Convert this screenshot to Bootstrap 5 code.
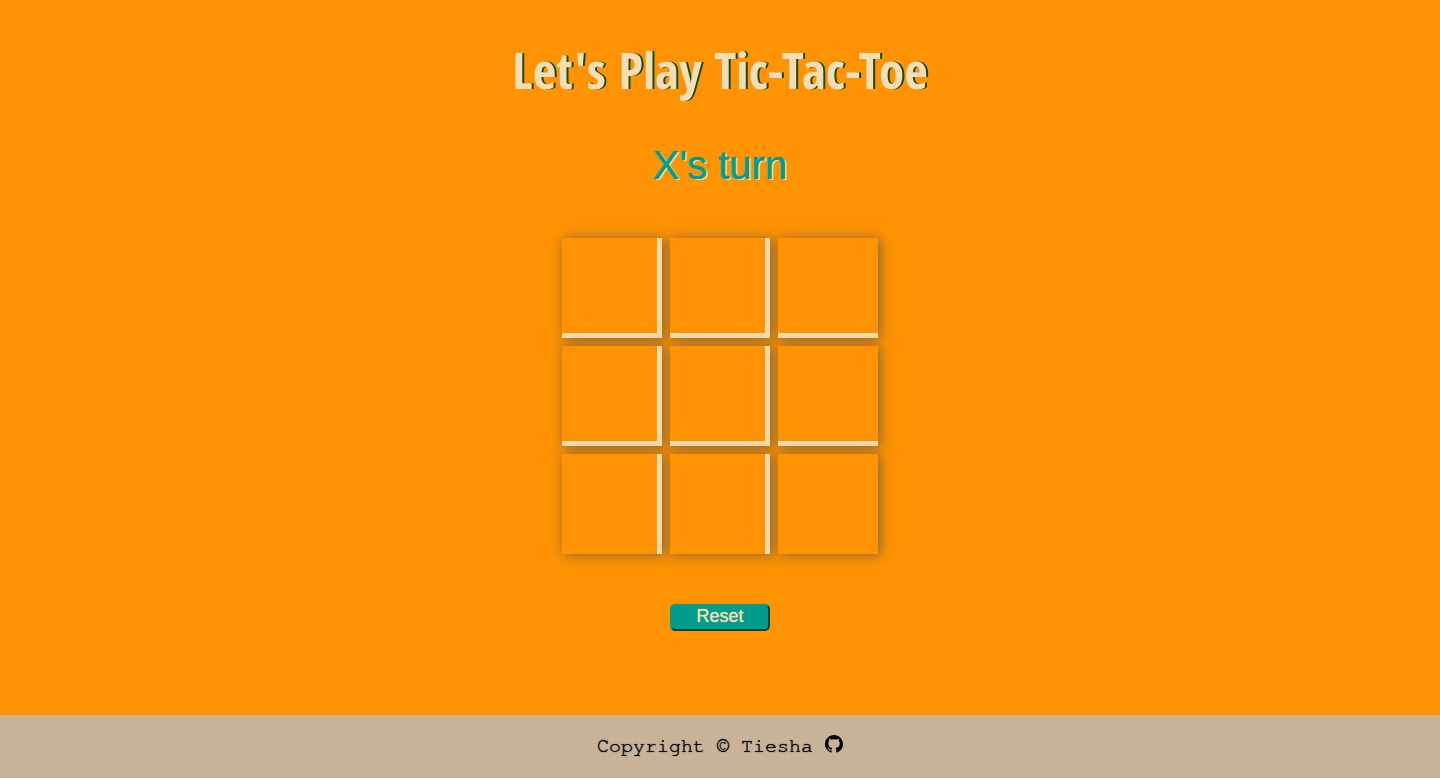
<!DOCTYPE html>
<html lang="en">
<head>
<meta charset="utf-8">
<meta name="viewport" content="width=device-width, initial-scale=1">
<title>Tic-Tac-Toe</title>
<link href="https://cdn.jsdelivr.net/npm/bootstrap@5.3.0/dist/css/bootstrap.min.css" rel="stylesheet">
<style>
body { background: #ff9302; font-family: "Liberation Sans", Arial, sans-serif; }
.game-title { color: #f5deb3; font: 700 51px/64px "Open Sans Condensed", "Roboto Condensed", sans-serif; text-shadow: 2px 0 #0d4a22; margin-top: 37px; }
.turn { color: #009c8c; font-size: 40px; line-height: 48px; text-shadow: 0 0 1px #009c8c, 2px 1px #f5deb3; margin-top: 40px; }
.board { display: grid; grid-template-columns: repeat(3, 100px); gap: 8px; margin-top: 49px; }
.square { height: 100px; padding: 0; background: #ff9302; border: 0 solid #f5deab; box-shadow: 2px 1px 12px 0 rgba(80, 80, 80, .7); }
.square:not(:nth-child(3n)) { border-right-width: 5px; }
.square:nth-child(-n+6) { border-bottom-width: 5px; }
.reset { width: 100px; padding: 0 0 3px; margin-top: 50px; background: #009c8c; color: #f5deb3; border: 2px outset #009c8c; border-radius: 5px; font-size: 18px; line-height: 20px; text-shadow: 0 0 1px #f5deb3; }
.site-footer { background: #c8b398; color: #000; padding: 19px 0 20px; font: 20px/24px "FreeMono", "Courier New", "Liberation Mono", monospace; text-shadow: 0 0 1px #000; }
.site-footer svg { vertical-align: -1px; }
</style>
</head>
<body class="d-flex flex-column min-vh-100">
<main class="flex-grow-1 d-flex flex-column align-items-center">
<h1 class="game-title mb-0">Let's Play Tic-Tac-Toe</h1>
<h2 class="turn mb-0 fw-normal">X's turn</h2>
<div class="board">
<button class="square" aria-label="Square 1"></button><button class="square" aria-label="Square 2"></button><button class="square" aria-label="Square 3"></button>
<button class="square" aria-label="Square 4"></button><button class="square" aria-label="Square 5"></button><button class="square" aria-label="Square 6"></button>
<button class="square" aria-label="Square 7"></button><button class="square" aria-label="Square 8"></button><button class="square" aria-label="Square 9"></button>
</div>
<button class="reset">Reset</button>
</main>
<footer class="site-footer d-flex justify-content-center align-items-center">
<span>Copyright © Tiesha <a href="#" class="text-reset" aria-label="GitHub"><svg width="18" height="18" viewBox="0 0 16 16" fill="currentColor" aria-hidden="true"><path d="M8 0C3.58 0 0 3.58 0 8c0 3.54 2.29 6.53 5.47 7.59.4.07.55-.17.55-.38 0-.19-.01-.82-.01-1.49-2.01.37-2.53-.49-2.69-.94-.09-.23-.48-.94-.82-1.13-.28-.15-.68-.52-.01-.53.63-.01 1.08.58 1.23.82.72 1.21 1.87.87 2.33.66.07-.52.28-.87.51-1.07-1.78-.2-3.64-.89-3.64-3.95 0-.87.31-1.59.82-2.15-.08-.2-.36-1.02.08-2.12 0 0 .67-.21 2.2.82.64-.18 1.32-.27 2-.27s1.36.09 2 .27c1.53-1.04 2.2-.82 2.2-.82.44 1.1.16 1.92.08 2.12.51.56.82 1.27.82 2.15 0 3.07-1.87 3.75-3.65 3.95.29.25.54.73.54 1.48 0 1.07-.01 1.93-.01 2.2 0 .21.15.46.55.38A8.01 8.01 0 0 0 16 8c0-4.42-3.58-8-8-8z"/></svg></a></span>
</footer>
<script src="https://cdn.jsdelivr.net/npm/bootstrap@5.3.0/dist/js/bootstrap.bundle.min.js"></script>
</body>
</html>
